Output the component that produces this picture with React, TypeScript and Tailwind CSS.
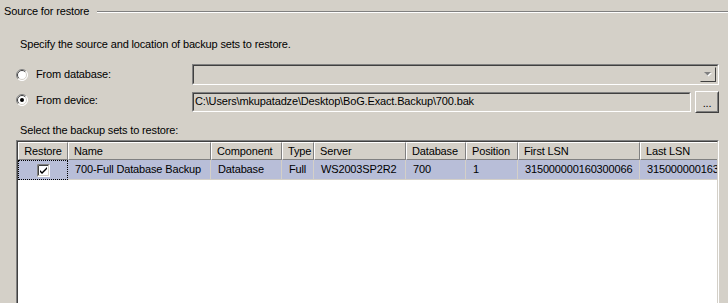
const COLUMNS = [
  { key: "restore", label: "Restore", w: "w-[50px]", center: true },
  { key: "name", label: "Name", w: "w-[143px]" },
  { key: "component", label: "Component", w: "w-[71px]" },
  { key: "type", label: "Type", w: "w-[32px]" },
  { key: "server", label: "Server", w: "w-[92px]" },
  { key: "database", label: "Database", w: "w-[60px]" },
  { key: "position", label: "Position", w: "w-[52px]" },
  { key: "firstLsn", label: "First LSN", w: "w-[122px]" },
  { key: "lastLsn", label: "Last LSN", w: "w-[122px]" },
];

const BACKUP_SET: Record<string, string> = {
  name: "700-Full Database Backup",
  component: "Database",
  type: "Full",
  server: "WS2003SP2R2",
  database: "700",
  position: "1",
  firstLsn: "315000000160300066",
  lastLsn: "315000000163000001",
};

function Radio({ checked }: { checked?: boolean }) {
  return (
    <svg width="12" height="12" viewBox="0 0 12 12" className="shrink-0">
      <circle cx="6" cy="6" r="5.5" fill="#ffffff" />
      <path d="M2.1 9.9 A5.5 5.5 0 0 1 9.9 2.1" stroke="#808080" strokeWidth="1" fill="none" />
      <path d="M9.9 2.1 A5.5 5.5 0 0 1 2.1 9.9" stroke="#ffffff" strokeWidth="1" fill="none" />
      <path d="M2.8 9.2 A4.5 4.5 0 0 1 9.2 2.8" stroke="#404040" strokeWidth="1" fill="none" />
      <path d="M9.2 2.8 A4.5 4.5 0 0 1 2.8 9.2" stroke="#d4d0c8" strokeWidth="1" fill="none" />
      {checked && <circle cx="6" cy="6" r="2" fill="#000000" />}
    </svg>
  );
}

function CheckBox() {
  return (
    <svg width="13" height="13" viewBox="0 0 13 13">
      <rect x="0" y="0" width="13" height="13" fill="#ffffff" />
      <path d="M0.5 12.5 V0.5 H12.5" stroke="#808080" fill="none" />
      <path d="M1.5 11.5 V1.5 H11.5" stroke="#404040" fill="none" />
      <path d="M1.5 11.5 H11.5 V1.5" stroke="#d4d0c8" fill="none" />
      <path d="M3 6 L5 8 L10 3 V5 L5 10 L3 8 Z" fill="#000000" />
    </svg>
  );
}

export default function App() {
  return (
    <div className="w-[728px] h-[303px] overflow-hidden bg-[#d4d0c8] text-[11px] leading-[13px] tracking-[-0.15px] text-black font-['Liberation_Sans',Arial,sans-serif]">
      <div className="flex items-center pt-[5px] pl-[4px]">
        <span>Source for restore</span>
        <div className="ml-[8px] flex-1 border-t border-t-[#808080] border-b border-b-white" />
      </div>

      <div className="pl-[16px]">
        <div className="mt-[20px] pl-[4px]">Specify the source and location of backup sets to restore.</div>

        <div className="mt-[13px] flex h-[21px] items-center">
          <div className="flex w-[176px] items-center gap-[8px]">
            <Radio />
            <span>From database:</span>
          </div>
          <div className="h-[21px] w-[527px] border border-t-[#808080] border-l-[#808080] border-r-white border-b-white">
            <div className="flex h-full justify-end border border-t-[#404040] border-l-[#404040] border-r-[#d4d0c8] border-b-[#d4d0c8] p-[1px]">
              <div className="flex w-[16px] items-center justify-center border border-t-[#d4d0c8] border-l-[#d4d0c8] border-r-[#404040] border-b-[#404040]">
                <svg width="8" height="5" viewBox="0 0 8 5">
                  <path d="M1 1 H8 L4.5 4.5 Z" fill="#ffffff" />
                  <path d="M0 0 H7 L3.5 3.5 Z" fill="#808080" />
                </svg>
              </div>
            </div>
          </div>
        </div>

        <div className="mt-[6px] flex h-[22px] items-start">
          <div className="flex h-[18px] w-[176px] items-center gap-[8px]">
            <Radio checked />
            <span>From device:</span>
          </div>
          <div className="mt-[1px] h-[20px] w-[499px] border border-t-[#808080] border-l-[#808080] border-r-white border-b-white">
            <div className="h-full border border-t-[#404040] border-l-[#404040] border-r-[#d4d0c8] border-b-[#d4d0c8] pl-[1px] pt-[1px] whitespace-nowrap">
              C:\Users\mkupatadze\Desktop\BoG.Exact.Backup\700.bak
            </div>
          </div>
          <div className="ml-[4px] h-[22px] w-[24px] border border-t-white border-l-white border-r-[#404040] border-b-[#404040]">
            <div className="flex h-full items-center justify-center border border-transparent border-r-[#808080] border-b-[#808080] pt-[3px]">
              ...
            </div>
          </div>
        </div>

        <div className="mt-[11px] pl-[4px]">Select the backup sets to restore:</div>

        <div className="mt-[3px] h-[170px] w-[703px] border border-t-[#808080] border-l-[#808080] border-r-white border-b-white">
          <div className="h-full overflow-hidden border border-t-[#404040] border-l-[#404040] border-r-[#d4d0c8] border-b-[#d4d0c8] bg-white">
            <div className="flex whitespace-nowrap">
              {COLUMNS.map((c) => (
                <div
                  key={c.key}
                  className={`${c.w} flex h-[18px] shrink-0 items-center border border-t-white border-l-white border-r-[#808080] border-b-[#808080] bg-[#d4d0c8] ${c.center ? "justify-center" : "pl-[5px]"}`}
                >
                  {c.label}
                </div>
              ))}
            </div>
            <div className="flex whitespace-nowrap">
              {COLUMNS.map((c) =>
                c.key === "restore" ? (
                  <div
                    key={c.key}
                    className={`${c.w} flex h-[20px] shrink-0 items-center justify-center bg-[#b8bed8] outline-1 outline-dotted outline-black -outline-offset-1`}
                  >
                    <CheckBox />
                  </div>
                ) : (
                  <div
                    key={c.key}
                    className={`${c.w} flex h-[20px] shrink-0 items-center overflow-hidden border-r border-b border-r-[#d4d0c8] border-b-[#d4d0c8] bg-[#b8bed8] pl-[7px]`}
                  >
                    {BACKUP_SET[c.key]}
                  </div>
                )
              )}
            </div>
          </div>
        </div>
      </div>
    </div>
  );
}
